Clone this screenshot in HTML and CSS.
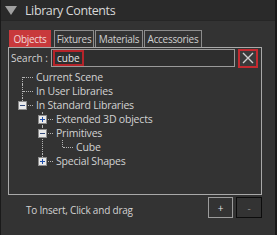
FILE: index.html
```html
<!DOCTYPE html>
<html>
<head>
<meta charset="utf-8">
<link rel="stylesheet" href="styles.css">
</head>
<body>
<div class="panel">
  <div class="header">
    <span class="tri"></span>
    <span class="title">Library Contents</span>
  </div>
  <div class="tabs">
    <div class="tab active t-obj">Objects</div>
    <div class="tab t-fix">Fixtures</div>
    <div class="tab t-mat">Materials</div>
    <div class="tab t-acc">Accessories</div>
  </div>
  <div class="box">
    <div class="search">
      <span class="label">Search :</span>
      <div class="input"><span class="query">cube</span></div>
      <div class="clear">
        <svg width="12" height="12" viewBox="0 0 12 12"><path d="M1 1L11 11M11 1L1 11" stroke="#cfcfcf" stroke-width="1.4"/></svg>
      </div>
    </div>
    <ul class="tree">
      <li><div class="row"><span class="txt">Current Scene</span></div></li>
      <li><div class="row"><span class="txt">In User Libraries</span></div></li>
      <li class="last">
        <div class="row">
          <svg class="exp" width="9" height="9" viewBox="0 0 9 9"><rect x="0.5" y="0.5" width="8" height="8" fill="#e9e9e9" stroke="#8c8c8c"/><path d="M2 4.5H7" stroke="#334a7a" stroke-width="1"/></svg>
          <span class="txt">In Standard Libraries</span>
        </div>
        <ul>
          <li>
            <div class="row">
              <svg class="exp" width="9" height="9" viewBox="0 0 9 9"><rect x="0.5" y="0.5" width="8" height="8" fill="#e9e9e9" stroke="#8c8c8c"/><path d="M2 4.5H7M4.5 2V7" stroke="#1f4ea8" stroke-width="1"/></svg>
              <span class="txt">Extended 3D objects</span>
            </div>
          </li>
          <li>
            <div class="row">
              <svg class="exp" width="9" height="9" viewBox="0 0 9 9"><rect x="0.5" y="0.5" width="8" height="8" fill="#e9e9e9" stroke="#8c8c8c"/><path d="M2 4.5H7" stroke="#334a7a" stroke-width="1"/></svg>
              <span class="txt">Primitives</span>
            </div>
            <ul>
              <li class="last"><div class="row"><span class="txt">Cube</span></div></li>
            </ul>
          </li>
          <li class="last">
            <div class="row">
              <svg class="exp" width="9" height="9" viewBox="0 0 9 9"><rect x="0.5" y="0.5" width="8" height="8" fill="#e9e9e9" stroke="#8c8c8c"/><path d="M2 4.5H7M4.5 2V7" stroke="#1f4ea8" stroke-width="1"/></svg>
              <span class="txt">Special Shapes</span>
            </div>
          </li>
        </ul>
      </li>
    </ul>
  </div>
  <div class="footer">
    <span class="hint">To Insert, Click and drag</span>
    <div class="btns">
      <div class="btn plus">+</div>
      <div class="btn minus">-</div>
    </div>
  </div>
</div>
</body>
</html>
```
FILE: styles.css
```css
html, body {
  margin: 0;
  padding: 0;
  background: #333333;
}
.panel {
  width: 277px;
  height: 235px;
  box-sizing: border-box;
  border-left: 1px solid #1a1a1a;
  border-right: 2px solid #1a1a1a;
  background: #333333;
  font-family: "Open Sans", "Noto Sans", sans-serif;
  color: #d2d2d2;
}
.header {
  height: 20px;
  background: #2a2a2a;
  display: flex;
  align-items: center;
  padding-left: 4px;
  gap: 8px;
  border-bottom: 1px solid #262626;
}
.tri {
  width: 0;
  height: 0;
  border-left: 6.5px solid transparent;
  border-right: 6.5px solid transparent;
  border-top: 9px solid #a0a0a0;
}
.title {
  font-size: 12.5px;
  letter-spacing: -0.4px;
  color: #d8d8d8;
}
.tabs {
  display: flex;
  gap: 1px;
  margin-top: 9px;
  padding-left: 8px;
  height: 17px;
}
.tab {
  box-sizing: border-box;
  border: 1px solid #8c8c8c;
  border-bottom: none;
  font-size: 10px;
  letter-spacing: -0.3px;
  text-align: center;
  line-height: 16px;
  color: #d0d0d0;
  white-space: nowrap;
}
.t-obj { width: 42px; margin-right: 2px; }
.t-fix { width: 40px; }
.t-mat { width: 48px; }
.t-acc { width: 58px; }
.tab.active {
  background: #c8393c;
  border-color: #c8393c;
  color: #f1d8d8;
}
.box {
  margin-left: 7px;
  width: 254px;
  height: 148px;
  box-sizing: border-box;
  border: 1px solid #a9a9a9;
}
.search {
  display: flex;
  align-items: center;
  margin-top: 1px;
  padding-left: 2px;
  height: 18px;
}
.label {
  font-size: 10px;
  width: 40px;
}
.input {
  width: 184px;
  height: 18px;
  box-sizing: border-box;
  border: 1px solid #9a9a9a;
  background: #2e2e2e;
  display: flex;
  align-items: center;
  padding-left: 1px;
}
.query {
  border: 2px solid #b5242a;
  font-size: 10px;
  line-height: 10px;
  padding: 1px 2px;
  color: #e6e6e6;
}
.clear {
  margin-left: 3px;
  width: 20px;
  height: 19px;
  box-sizing: border-box;
  border: 2px solid #c42a30;
  background: #3a3a3a;
  display: flex;
  align-items: center;
  justify-content: center;
}
.tree, .tree ul {
  list-style: none;
  margin: 0;
  padding: 0;
}
.tree {
  margin-top: 3px;
  font-size: 10.5px;
  letter-spacing: -0.2px;
}
.tree ul {
  padding-left: 20px;
}
.tree li {
  position: relative;
}
.tree li::before {
  content: "";
  position: absolute;
  left: 13px;
  top: 0;
  bottom: 0;
  border-left: 1px dotted #b4b4b4;
}
.tree > li:first-child::before {
  top: 7px;
}
.tree li.last::before {
  bottom: auto;
  height: 7px;
}
.row {
  position: relative;
  height: 14px;
  line-height: 14px;
  padding-left: 27px;
  white-space: nowrap;
}
.row::before {
  content: "";
  position: absolute;
  left: 14px;
  top: 7px;
  width: 10px;
  border-top: 1px dotted #b4b4b4;
}
.exp {
  position: absolute;
  left: 9px;
  top: 3px;
  z-index: 1;
  display: block;
}
.footer {
  display: flex;
  align-items: flex-start;
  justify-content: space-between;
  margin-top: 2px;
  padding-left: 25px;
}
.hint {
  font-size: 10px;
  line-height: 14px;
  margin-top: 6px;
  letter-spacing: -0.2px;
}
.btns {
  display: flex;
  gap: 3px;
  margin-right: 13px;
}
.btn {
  width: 25px;
  height: 21px;
  box-sizing: border-box;
  display: flex;
  align-items: center;
  justify-content: center;
  font-size: 10px;
}
.plus { border: 1px solid #9c9c9c; color: #e0e0e0; }
.minus { border: 1px solid #0c0c0c; color: #8a8a8a; width: 26px; }
```
